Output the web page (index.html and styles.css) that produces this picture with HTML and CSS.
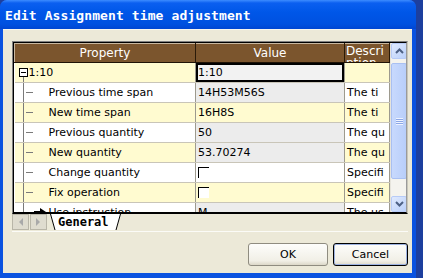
FILE: index.html
```html
<!DOCTYPE html>
<html>
<head>
    <title>Edit Assignment time adjustment</title>
    <link rel="stylesheet" href="styles.css">
</head>
<body>
    <div class="window">
        <div class="titlebar">Edit Assignment time adjustment</div>

        <div class="client">
            <div class="grid">
                <div class="grid-inner">
                    <table class="props">
                        <colgroup>
                            <col class="c-prop">
                            <col class="c-value">
                            <col class="c-desc">
                        </colgroup>
                        <tr class="head">
                            <th>Property</th>
                            <th>Value</th>
                            <th class="desc-head"><div>Descri<br>ption</div></th>
                        </tr>
                        <tr class="group">
                            <td class="prop yellow"><span class="minus"></span>1:10</td>
                            <td class="value selected">1:10</td>
                            <td class="desc yellow"></td>
                        </tr>
                        <tr>
                            <td class="prop child">Previous time span</td>
                            <td class="value grey">14H53M56S</td>
                            <td class="desc">The ti</td>
                        </tr>
                        <tr>
                            <td class="prop child yellow">New time span</td>
                            <td class="value yellow">16H8S</td>
                            <td class="desc yellow">The ti</td>
                        </tr>
                        <tr>
                            <td class="prop child">Previous quantity</td>
                            <td class="value grey">50</td>
                            <td class="desc">The qu</td>
                        </tr>
                        <tr>
                            <td class="prop child yellow">New quantity</td>
                            <td class="value grey">53.70274</td>
                            <td class="desc yellow">The qu</td>
                        </tr>
                        <tr>
                            <td class="prop child">Change quantity</td>
                            <td class="value"><span class="check"></span></td>
                            <td class="desc">Specifi</td>
                        </tr>
                        <tr>
                            <td class="prop child yellow">Fix operation</td>
                            <td class="value yellow"><span class="check"></span></td>
                            <td class="desc yellow">Specifi</td>
                        </tr>
                        <tr>
                            <td class="prop child last"><svg class="pointer" width="13" height="8" viewBox="0 0 13 8"><path d="M0 4h7" stroke="#000" stroke-width="2"/><path d="M6 0l6 4-6 4z" fill="#000"/></svg>Use instruction</td>
                            <td class="value grey">M</td>
                            <td class="desc">The us</td>
                        </tr>
                    </table>

                    <div class="vscroll">
                        <div class="sbtn"><svg width="9" height="6" viewBox="0 0 9 6"><path d="M1 5l3.5-3.5L8 5" fill="none" stroke="#4d6185" stroke-width="2"/></svg></div>
                        <div class="thumb"><span class="grip"></span></div>
                        <div class="track"></div>
                        <div class="sbtn"><svg width="9" height="6" viewBox="0 0 9 6"><path d="M1 1l3.5 3.5L8 1" fill="none" stroke="#4d6185" stroke-width="2"/></svg></div>
                    </div>
                </div>
            </div>

            <div class="tabs">
                <span class="nav"><svg width="5" height="8" viewBox="0 0 5 8"><path d="M5 0v8L1 4z" fill="#a9a9a9"/></svg></span>
                <span class="nav"><svg width="5" height="8" viewBox="0 0 5 8"><path d="M0 0v8l4-4z" fill="#a9a9a9"/></svg></span>
                <span class="tab">General</span>
            </div>

            <div class="buttons">
                <button class="btn">OK</button>
                <button class="btn default">Cancel</button>
            </div>
        </div>
    </div>
</body>
</html>
```

FILE: styles.css
```css
html, body {
    margin: 0;
    padding: 0;
}

body {
    width: 423px;
    height: 278px;
    overflow: hidden;
    background: #1d3f9e;
    font-family: "DejaVu Sans", sans-serif;
}

.window {
    width: 416px;
    height: 278px;
    display: flex;
    flex-direction: column;
    border-radius: 7px 7px 0 0;
    overflow: hidden;
    background: #0a52e0;
}

.titlebar {
    height: 29px;
    flex: none;
    padding-left: 5px;
    line-height: 31px;
    color: #fff;
    font-family: "DejaVu Sans Mono", monospace;
    font-weight: bold;
    font-size: 13px;
    letter-spacing: 0.1px;
    background: linear-gradient(to bottom, #3d8cff 0, #0b5ff0 3px, #0057e8 12px, #0051e0 24px, #0046d2 29px);
}

.client {
    flex: none;
    height: 244px;
    margin: 0 4px 0 3px;
    background: #ece9d8;
    padding: 11px 1px 0 9px;
    box-sizing: border-box;
    border-top: 1px solid #f7f6ef;
}

/* property grid */
.grid {
    width: 396px;
    height: 173px;
    box-sizing: border-box;
    border: 1px solid #808080;
    border-right-color: #c8c6ba;
    border-bottom: 1px solid #000;
}

.grid-inner {
    display: flex;
    height: 100%;
    border: 1px solid #000;
    border-right: 1px solid #9a9a9a;
    border-bottom-width: 1px;
    box-sizing: border-box;
    overflow: hidden;
    background: #fff;
}

.props {
    width: 375px;
    table-layout: fixed;
    border-collapse: collapse;
    font-size: 11px;
    color: #000;
}

.c-prop { width: 181px; }
.c-value { width: 149px; }
.c-desc { width: 45px; }

.props th,
.props td {
    height: 19px;
    padding: 0;
    white-space: nowrap;
    overflow: hidden;
    border-bottom: 1px solid #c9c5b8;
    border-right: 1px solid #9d9a8e;
}

.props .head th {
    height: 18px;
    background: #7b552d;
    color: #fff;
    font-weight: normal;
    font-size: 12px;
    border-top: 1px solid #c9b79f;
    border-left: 1px solid #c9b79f;
    border-right: 1px solid #2a1a08;
    border-bottom: 1px solid #1e1206;
}

.desc-head div {
    height: 18px;
    overflow: hidden;
    line-height: 12px;
    padding-top: 1px;
    box-sizing: border-box;
    text-align: left;
    padding-left: 1px;
}

.prop {
    padding-left: 34px !important;
}

.value, .desc {
    padding-left: 2px !important;
}

.yellow { background: #fffbd0; }
.grey { background: #ececec; }

.group .prop {
    padding-left: 4px !important;
    background-image: linear-gradient(#7a7a7a, #7a7a7a);
    background-size: 1px 6px;
    background-position: 8px 14px;
    background-repeat: no-repeat;
}

.minus {
    display: inline-block;
    width: 7px;
    height: 7px;
    border: 1px solid #000;
    margin-right: 1px;
    vertical-align: -1px;
    background: linear-gradient(#000, #000) center / 5px 1px no-repeat, #fff;
}

.child {
    background-image: linear-gradient(#7a7a7a, #7a7a7a), linear-gradient(#7a7a7a, #7a7a7a);
    background-size: 1px 100%, 7px 1px;
    background-position: 8px 0, 11px 9px;
    background-repeat: no-repeat;
}

.child.last {
    background-image: linear-gradient(#7a7a7a, #7a7a7a);
    background-size: 1px 100%;
    background-position: 8px 0;
}

.pointer {
    margin-left: -15px;
    margin-right: 2px;
    vertical-align: 0;
}

.selected {
    background: #f2f2f2;
    box-shadow: inset 0 0 0 2px #000;
}

.check {
    display: inline-block;
    width: 11px;
    height: 11px;
    box-sizing: border-box;
    border-top: 1px solid #000;
    border-left: 1px solid #000;
    background: #fff;
    vertical-align: -2px;
}

/* scrollbar */
.vscroll {
    width: 16px;
    flex: none;
    display: flex;
    flex-direction: column;
    background: #f4f3ee;
    border-left: 1px solid #e6e4dc;
}

.sbtn {
    height: 16px;
    box-sizing: border-box;
    border: 1px solid #b7cbf7;
    border-radius: 2px;
    background: linear-gradient(to bottom right, #e0eafe, #bad0fa);
    display: flex;
    align-items: center;
    justify-content: center;
    flex: none;
}

.thumb {
    height: 116px;
    flex: none;
    margin-top: 4px;
    box-sizing: border-box;
    border: 1px solid #a9c0f2;
    border-radius: 2px;
    background: linear-gradient(to right, #c8d9fd, #b8cefa);
    display: flex;
    align-items: center;
    justify-content: center;
}

.grip {
    width: 7px;
    height: 7px;
    background: repeating-linear-gradient(to bottom, #eef3ff 0 1px, #8ca7e6 1px 2px);
}

.track {
    flex: 1;
}

/* sheet tabs */
.tabs {
    display: flex;
    align-items: flex-start;
    width: 396px;
    height: 17px;
    border-bottom: 1px solid #fbfbf7;
}

.nav {
    width: 17px;
    height: 16px;
    box-sizing: border-box;
    border: 1px solid #b9b6a8;
    background: #dfdccf;
    display: flex;
    align-items: center;
    justify-content: center;
    margin-right: 1px;
}

.tab {
    margin-left: 2px;
    width: 71px;
    height: 16px;
    padding-left: 8px;
    box-sizing: border-box;
    font-family: "DejaVu Sans Mono", monospace;
    font-weight: bold;
    font-size: 12px;
    line-height: 16px;
    background: url("data:image/svg+xml,%3Csvg xmlns='http://www.w3.org/2000/svg' width='71' height='16'%3E%3Cpath d='M0 0H71L66 16H5Z' fill='%23fff'/%3E%3Cpath d='M0.5 0L5 16M70.5 0L66 16' stroke='%23000' fill='none'/%3E%3C/svg%3E") no-repeat;
}

/* dialog buttons */
.buttons {
    display: flex;
    justify-content: flex-end;
    gap: 5px;
    margin-top: 11px;
    width: 396px;
}

.btn {
    width: 80px;
    height: 23px;
    font-family: "DejaVu Sans", sans-serif;
    font-size: 11px;
    color: #000;
    background: linear-gradient(#fdfdfb, #f1efe6 80%, #dcd8c8);
    border: 1px solid #8f8c80;
    border-radius: 3px;
    padding: 0;
}

.btn.default {
    width: 75px;
    border: 1px solid #000;
    box-shadow: inset 0 0 0 1px #9db2e0;
}
```
